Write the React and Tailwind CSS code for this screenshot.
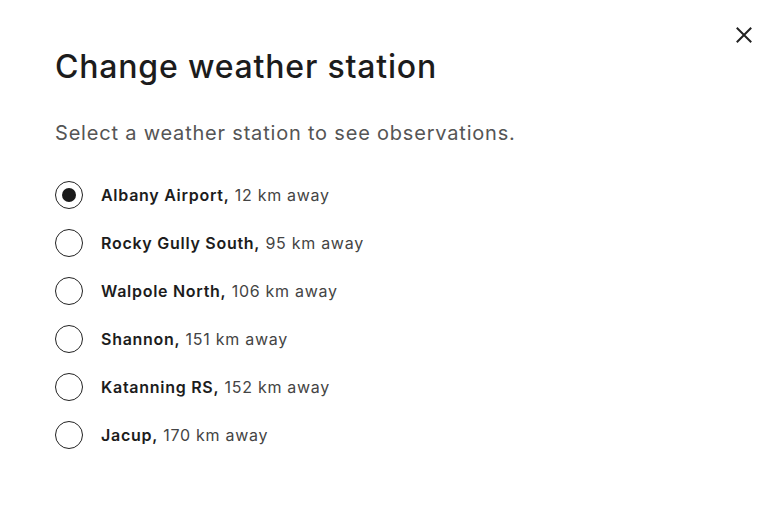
import { useState } from "react"

const stations = [
  { name: "Albany Airport", distance: 12 },
  { name: "Rocky Gully South", distance: 95 },
  { name: "Walpole North", distance: 106 },
  { name: "Shannon", distance: 151 },
  { name: "Katanning RS", distance: 152 },
  { name: "Jacup", distance: 170 },
]

function App() {
  const [selected, setSelected] = useState("Albany Airport")

  return (
    <div
      className="relative w-[778px] h-[505px] bg-white text-[#1a1a1a]"
      style={{ fontFamily: "Inter, 'Noto Sans', sans-serif" }}
    >
      {/* Close button */}
      <button className="absolute right-[24px] top-[25px] w-[20px] h-[20px] flex items-center justify-center text-[#222]">
        <svg width="18" height="18" viewBox="0 0 18 18" fill="none" stroke="currentColor" strokeWidth="2" strokeLinecap="square">
          <path d="M2.5 2.5l13 13M15.5 2.5l-13 13" />
        </svg>
      </button>

      <div className="pl-[55px] pt-[47px]">
        <h2 className="text-[32px] leading-[40px] font-medium tracking-[0.025em] text-[#1c1c1c]">
          Change weather station
        </h2>
        <p className="mt-[32px] text-[20px] leading-[28px] tracking-[0.04em] text-[#555]">
          Select a weather station to see observations.
        </p>

        <div className="mt-[34px] flex flex-col gap-[20px]">
          {stations.map((s) => (
            <label
              key={s.name}
              className="flex items-center gap-[18px] h-[28px] cursor-pointer"
              onClick={() => setSelected(s.name)}
            >
              <span className="w-[28px] h-[28px] rounded-full border-[1.5px] border-[#222] flex items-center justify-center">
                {selected === s.name && (
                  <span className="w-[14px] h-[14px] rounded-full bg-[#1a1a1a]" />
                )}
              </span>
              <span className="text-[16px] tracking-[0.045em] text-[#444]">
                <span className="font-semibold text-[#1c1c1c]">{s.name},</span>{" "}
                {s.distance} km away
              </span>
            </label>
          ))}
        </div>
      </div>
    </div>
  )
}

export default App
